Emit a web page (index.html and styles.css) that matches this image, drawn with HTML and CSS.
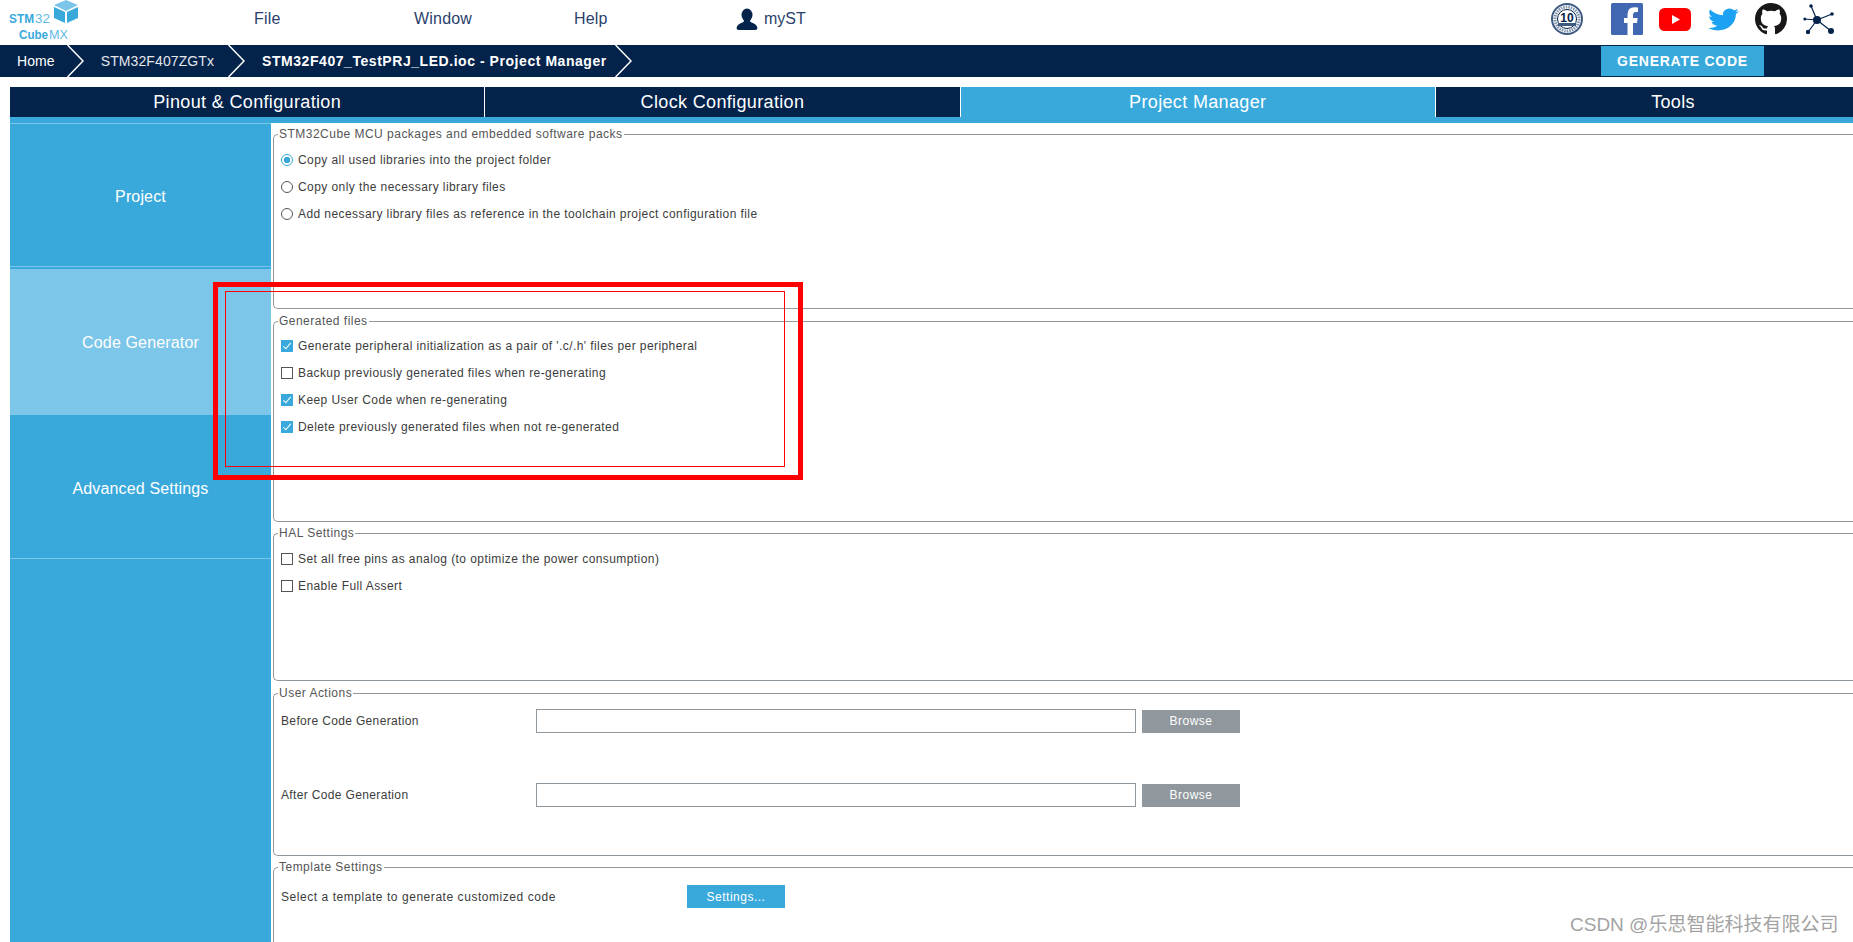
FILE: index.html
```html
<!DOCTYPE html>
<html lang="en">
<head>
    <meta charset="UTF-8">
    <title>STM32CubeMX - Project Manager</title>
    <link rel="stylesheet" href="styles.css">
</head>
<body>
    <header class="topbar">
        <svg class="logo" viewBox="0 0 90 45">
            <polygon points="66,0 78,5 66,11 54,5" fill="#7cc6e9"/>
            <polygon points="54,7 65,12 65,23 54,18" fill="#39a9dc"/>
            <polygon points="78,7 67,12 67,23 78,18" fill="#39a9dc"/>
            <text x="9" y="23" class="logo-text" textLength="25" lengthAdjust="spacingAndGlyphs" font-weight="700">STM</text>
            <text x="35" y="23" class="logo-text logo-light" textLength="15" lengthAdjust="spacingAndGlyphs">32</text>
            <text x="19" y="39" class="logo-text" textLength="29" lengthAdjust="spacingAndGlyphs" font-weight="700">Cube</text>
            <text x="49" y="39" class="logo-text logo-light" textLength="19" lengthAdjust="spacingAndGlyphs">MX</text>
        </svg>
        <nav class="menu">
            <span class="menu-item">File</span>
            <span class="menu-item">Window</span>
            <span class="menu-item">Help</span>
            <span class="menu-item menu-user">
                <svg class="user-icon" viewBox="0 0 22 22">
                    <ellipse cx="11" cy="7" rx="5.5" ry="6.5" fill="#03234b"/>
                    <path d="M8 12 L7.500 14 Q1 16 0.500 20 Q0.500 22 3 22 L19 22 Q21.500 22 21.500 20 Q21 16 14.500 14 L14 12 Z" fill="#03234b"/>
                </svg>
                myST
            </span>
        </nav>
        <div class="social">
            <svg class="badge" viewBox="0 0 32 32">
                <circle cx="16" cy="16" r="15" fill="#fff" stroke="#3d5a80" stroke-width="2"/>
                <circle cx="16" cy="16" r="12" fill="none" stroke="#7f93ad" stroke-width="3" stroke-dasharray="1.500 1"/>
                <circle cx="16" cy="16" r="9.500" fill="#fff" stroke="#03234b" stroke-width="1"/>
                <text x="16" y="19" class="badge-text">10</text>
                <rect x="7" y="20" width="18" height="3" fill="#3d5a80"/>
            </svg>
            <svg class="fb" viewBox="0 0 32 32">
                <rect width="32" height="32" rx="1.500" fill="#4267b2"/>
                <path d="M22 32 V20 H26 L26.700 15 H22 V12 Q22 9 25 9 H27 V4.500 Q25 4.200 23.500 4.200 Q16.500 4.200 16.500 11.500 V15 H13 V20 H16.500 V32 Z" fill="#fff"/>
            </svg>
            <svg class="yt" viewBox="0 0 32 23">
                <rect width="32" height="23" rx="5.500" fill="#ff0000"/>
                <polygon points="13,7 13,16 21,11.500" fill="#fff"/>
            </svg>
            <svg class="tw" viewBox="0 0 24 24" preserveAspectRatio="none">
                <path d="M23.953 4.570a10 10 0 01-2.825.775 4.958 4.958 0 002.163-2.723c-.951.555-2.005.959-3.127 1.184a4.920 4.920 0 00-8.384 4.482C7.690 8.095 4.067 6.130 1.640 3.162a4.822 4.822 0 00-.666 2.475c0 1.710.870 3.213 2.188 4.096a4.904 4.904 0 01-2.228-.616v.060a4.923 4.923 0 003.946 4.827 4.996 4.996 0 01-2.212.085 4.936 4.936 0 004.604 3.417 9.867 9.867 0 01-6.102 2.105c-.390 0-.779-.023-1.170-.067a13.995 13.995 0 007.557 2.209c9.053 0 13.998-7.496 13.998-13.985 0-.210 0-.420-.015-.630A9.935 9.935 0 0024 4.590z" fill="#1da1f2"/>
            </svg>
            <svg class="gh" viewBox="0 0 16 16">
                <path d="M8 0C3.580 0 0 3.580 0 8c0 3.540 2.290 6.530 5.470 7.590.400.070.550-.170.550-.380 0-.190-.010-.820-.010-1.490-2.010.370-2.530-.490-2.690-.940-.090-.230-.480-.940-.820-1.130-.280-.150-.680-.520-.010-.530.630-.010 1.080.580 1.230.820.720 1.210 1.870.870 2.330.660.070-.520.280-.870.510-1.070-1.780-.200-3.640-.890-3.640-3.950 0-.870.310-1.590.820-2.150-.080-.200-.360-1.020.080-2.120 0 0 .670-.210 2.200.820.640-.180 1.320-.270 2-.270.680 0 1.360.090 2 .270 1.530-1.040 2.200-.820 2.200-.820.440 1.100.160 1.920.080 2.120.510.560.820 1.270.820 2.150 0 3.070-1.870 3.750-3.650 3.950.290.250.540.730.540 1.480 0 1.070-.010 1.930-.010 2.200 0 .210.150.460.550.380A8.013 8.013 0 0016 8c0-4.420-3.580-8-8-8z" fill="#191717"/>
            </svg>
            <svg class="net" viewBox="0 0 32 32">
                <g stroke="#03234b" stroke-width="1.200">
                    <line x1="14" y1="17" x2="8" y2="3"/>
                    <line x1="14" y1="17" x2="29" y2="11"/>
                    <line x1="14" y1="17" x2="1.500" y2="16"/>
                    <line x1="14" y1="17" x2="5" y2="29"/>
                    <line x1="14" y1="17" x2="28" y2="28"/>
                </g>
                <g fill="#03234b">
                    <circle cx="14" cy="17" r="4"/>
                    <circle cx="8" cy="3" r="1.800"/>
                    <circle cx="29" cy="11" r="1.800"/>
                    <circle cx="1.800" cy="16" r="1.500"/>
                    <circle cx="5" cy="29" r="2.200"/>
                    <circle cx="28" cy="28" r="3"/>
                </g>
            </svg>
        </div>
    </header>

    <div class="crumbs">
        <span class="crumb crumb-home">Home</span>
        <svg class="chevron" viewBox="0 0 17 32"><polyline points="0.500,0 16,16 0.500,32"/></svg>
        <span class="crumb crumb-chip">STM32F407ZGTx</span>
        <svg class="chevron" viewBox="0 0 17 32"><polyline points="0.500,0 16,16 0.500,32"/></svg>
        <span class="crumb crumb-current">STM32F407_TestPRJ_LED.ioc - Project Manager</span>
        <svg class="chevron" viewBox="0 0 17 32"><polyline points="0.500,0 16,16 0.500,32"/></svg>
        <button class="generate">GENERATE CODE</button>
    </div>

    <div class="tabs">
        <div class="tab">Pinout &amp; Configuration</div>
        <div class="tab">Clock Configuration</div>
        <div class="tab tab-active">Project Manager</div>
        <div class="tab">Tools</div>
    </div>

    <div class="main">
        <aside class="sidebar">
            <div class="side-item side-project">Project</div>
            <div class="side-item side-active">Code Generator</div>
            <div class="side-item side-advanced">Advanced Settings</div>
        </aside>

        <section class="content">
            <fieldset class="group group-packs">
                <legend>STM32Cube MCU packages and embedded software packs</legend>
                <label class="row"><input type="radio" name="pack" checked>Copy all used libraries into the project folder</label>
                <label class="row"><input type="radio" name="pack">Copy only the necessary library files</label>
                <label class="row"><input type="radio" name="pack">Add necessary library files as reference in the toolchain project configuration file</label>
            </fieldset>

            <fieldset class="group group-files">
                <legend>Generated files</legend>
                <label class="row"><input type="checkbox" checked>Generate peripheral initialization as a pair of '.c/.h' files per peripheral</label>
                <label class="row"><input type="checkbox">Backup previously generated files when re-generating</label>
                <label class="row"><input type="checkbox" checked>Keep User Code when re-generating</label>
                <label class="row"><input type="checkbox" checked>Delete previously generated files when not re-generated</label>
            </fieldset>

            <fieldset class="group group-hal">
                <legend>HAL Settings</legend>
                <label class="row"><input type="checkbox">Set all free pins as analog (to optimize the power consumption)</label>
                <label class="row"><input type="checkbox">Enable Full Assert</label>
            </fieldset>

            <fieldset class="group group-actions">
                <legend>User Actions</legend>
                <div class="action">
                    <span>Before Code Generation</span>
                    <input type="text" class="path">
                    <button class="browse">Browse</button>
                </div>
                <div class="action">
                    <span>After Code Generation</span>
                    <input type="text" class="path">
                    <button class="browse">Browse</button>
                </div>
            </fieldset>

            <fieldset class="group group-template">
                <legend>Template Settings</legend>
                <div class="template">
                    <span>Select a template to generate customized code</span>
                    <button class="settings">Settings...</button>
                </div>
            </fieldset>
        </section>
    </div>

    <!-- annotations drawn over the screenshot -->
    <div class="mark-outer"></div>
    <div class="mark-inner"></div>
    <div class="watermark">CSDN @乐思智能科技有限公司</div>
</body>
</html>
```

FILE: styles.css
```css
html, body {
    height: 100%;
}
body {
    margin: 0;
    overflow: hidden;
    position: relative;
    background: #fff;
    font-family: "Liberation Sans", Arial, sans-serif;
    font-size: 12px;
    color: #3c3c3c;
}

/* top bar */
.topbar {
    display: flex;
    align-items: center;
    height: 45px;
}
.logo {
    width: 90px;
    height: 45px;
    flex: none;
}
.logo-text {
    font-size: 13.5px;
    fill: #39a9dc;
}
.logo-light {
    fill: #62bae3;
}
.menu {
    display: flex;
    margin-left: 164px;
    margin-top: -8px;
}
.menu-item {
    width: 160px;
    display: flex;
    align-items: center;
    font-size: 16px;
    letter-spacing: 0.2px;
    color: #2a3f6b;
}
.menu-user {
    gap: 6px;
    letter-spacing: 0;
}
.user-icon {
    width: 22px;
    height: 22px;
    margin-left: 2px;
}
.social {
    display: flex;
    align-items: center;
    position: absolute;
    top: 3px;
    left: 1551px;
    height: 32px;
}
.badge { width: 32px; height: 32px; margin-right: 28px; }
.fb { width: 32px; height: 32px; margin-right: 16px; }
.yt { width: 32px; height: 23px; margin-right: 17px; }
.tw { width: 31px; height: 27px; margin-right: 16px; }
.gh { width: 32px; height: 32px; margin-right: 16px; }
.net { width: 32px; height: 32px; }
.badge-text {
    font-size: 12px;
    font-weight: 700;
    fill: #03234b;
    text-anchor: middle;
}

/* breadcrumb */
.crumbs {
    display: flex;
    align-items: center;
    height: 32px;
    background: #03234b;
    color: #fff;
    font-size: 14px;
}
.crumb-home {
    margin-left: 17px;
    margin-right: 12px;
    letter-spacing: 0.1px;
}
.crumb-chip {
    margin-left: 17px;
    margin-right: 14px;
    letter-spacing: 0.1px;
    color: #e3e7ec;
}
.crumb-current {
    margin-left: 17px;
    margin-right: 8px;
    font-weight: 700;
    letter-spacing: 0.55px;
}
.chevron {
    width: 17px;
    height: 32px;
    flex: none;
}
.chevron polyline {
    fill: none;
    stroke: #fff;
    stroke-width: 1.5;
}
.generate {
    position: absolute;
    left: 1601px;
    top: 46px;
    width: 163px;
    height: 30px;
    border: none;
    padding: 0;
    background: #39a9dc;
    color: #fff;
    font-family: inherit;
    font-size: 14px;
    font-weight: 700;
    letter-spacing: 0.75px;
}

/* tabs */
.tabs {
    display: flex;
    margin: 10px 0 0 10px;
    height: 30px;
}
.tab {
    flex: none;
    width: 475.3px;
    box-sizing: border-box;
    display: flex;
    align-items: center;
    justify-content: center;
    background: #03234b;
    border-right: 1px solid #fff;
    color: #fff;
    font-size: 18px;
    letter-spacing: 0.35px;
}
.tab-active {
    background: #39a9dc;
}

/* sidebar and content */
.main {
    display: flex;
    margin-left: 10px;
    height: 825px;
    border-top: 6px solid #39a9dc;
}
.sidebar {
    flex: none;
    width: 261px;
    background: #39a9dc;
    border-top: 1px solid #7cc6e9;
    color: #fff;
    font-size: 16px;
    letter-spacing: 0.15px;
}
.side-item {
    box-sizing: border-box;
    display: flex;
    align-items: center;
    justify-content: center;
    padding-top: 3px;
}
.side-project {
    height: 143px;
    border-bottom: 1px solid #7cc6e9;
    margin-bottom: 2px;
}
.side-active {
    height: 146px;
    padding-top: 1px;
    background: #7cc6e9;
}
.side-advanced {
    height: 144px;
    padding-top: 5px;
    border-bottom: 1px solid #7cc6e9;
}
.content {
    flex: 1;
    margin-left: 2px;
    padding-top: 4px;
    min-width: 0;
}
.group {
    box-sizing: border-box;
    margin: 0 0 5px;
    padding: 5px 0 0 7px;
    border: 1px solid #90989e;
    border-right: none;
    border-radius: 5px 0 0 5px;
}
.group legend {
    margin-left: -3px;
    padding: 0 1px;
    line-height: 14px;
    color: #555;
    letter-spacing: 0.48px;
}
.group-packs { height: 182px; }
.group-files { height: 208px; margin-bottom: 4px; padding-top: 4px; }
.group-hal { height: 155px; }
.group-actions { height: 170px; margin-bottom: 4px; padding-top: 9px; }
.group-template { height: 100px; padding-top: 11px; }

.row {
    display: flex;
    align-items: center;
    gap: 5px;
    height: 27px;
    letter-spacing: 0.42px;
}
.row input {
    box-sizing: border-box;
    position: relative;
    width: 12px;
    height: 12px;
    margin: 0;
    appearance: none;
    border: 1px solid #555;
    background: #fff;
}
.row input[type="radio"] {
    border-radius: 50%;
}
.row input[type="radio"]:checked {
    border-color: #39a9dc;
    background: radial-gradient(circle, #39a9dc 3px, #fff 3.5px);
}
.row input[type="checkbox"]:checked {
    border-color: #39a9dc;
    background: #39a9dc;
}
.row input[type="checkbox"]:checked::after {
    content: "";
    position: absolute;
    left: 3px;
    top: 0;
    width: 3px;
    height: 7px;
    border: solid #fff;
    border-width: 0 1.5px 1.5px 0;
    transform: rotate(40deg);
}
.action {
    display: grid;
    grid-template-columns: 249px 600px 98px;
    column-gap: 6px;
    align-items: center;
    height: 24px;
    margin-bottom: 50px;
    letter-spacing: 0.35px;
}
.path {
    box-sizing: border-box;
    height: 24px;
    margin: 0;
    border: 1px solid #90989e;
    background: #fff;
}
.browse, .settings {
    height: 23px;
    border: none;
    padding: 0;
    color: #fff;
    font-family: inherit;
    font-size: 12px;
    letter-spacing: 0.5px;
}
.browse {
    background: #90989e;
}
.template {
    display: grid;
    grid-template-columns: 406px 98px;
    align-items: center;
    letter-spacing: 0.55px;
}
.settings {
    background: #39a9dc;
    letter-spacing: 0.5px;
}

/* red annotation boxes */
.mark-outer {
    position: absolute;
    left: 213px;
    top: 282px;
    width: 590px;
    height: 198px;
    box-sizing: border-box;
    border: 5px solid #ff0000;
}
.mark-inner {
    position: absolute;
    left: 225px;
    top: 291px;
    width: 560px;
    height: 176px;
    box-sizing: border-box;
    border: 1px solid #ff0000;
}
.watermark {
    position: absolute;
    left: 1570px;
    top: 909px;
    font-family: "Liberation Sans", "Noto Sans CJK SC", sans-serif;
    font-size: 19px;
    color: #a3a3a3;
    white-space: nowrap;
}
```
